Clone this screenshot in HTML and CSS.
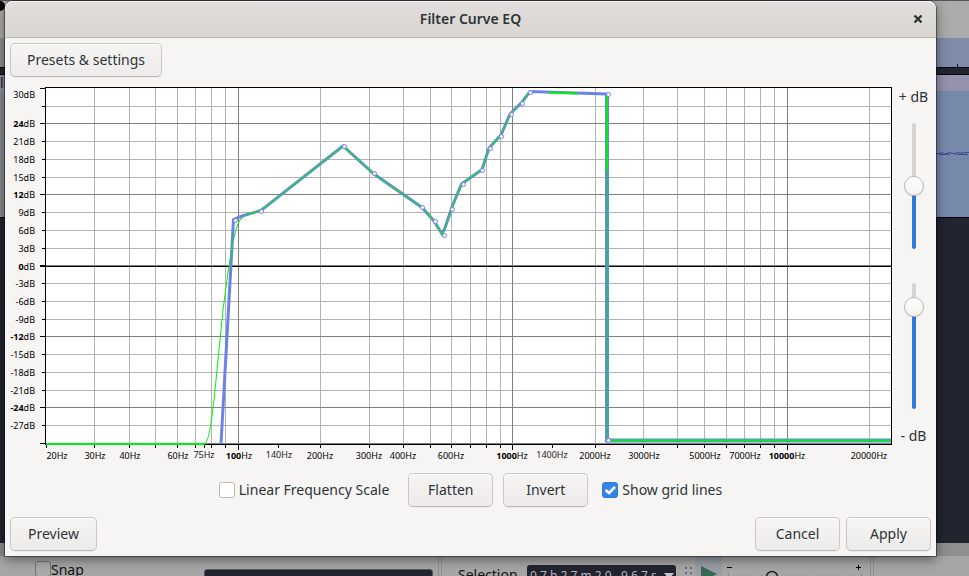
FILE: index.html
```html
<!DOCTYPE html>
<html lang="en">
<head>
<meta charset="utf-8">
<title>Filter Curve EQ</title>
<link rel="stylesheet" href="styles.css">
</head>
<body>
<div class="workspace">
  <div class="top-tools"><span class="record"></span></div>
  <div class="ruler"><span class="ruler-tick"></span></div>
  <div class="divider"></div>
  <div class="clip-title">li</div>
  <div class="clip">
    <svg class="wave" width="33" height="6" viewBox="0 0 33 6"><path d="M0 2.500H5V1.500H7V3.500H9V2.500H12V1.500H15V2.500H19V3.500H20V1.500H23V2.500H25V1.500H27V3.500H29V1.500H33M3 3.500H14M21 3.500H32" fill="none" stroke="#46489a" stroke-width="1"/></svg>
  </div>
  <div class="void"></div>
  <div class="scroll-strip"></div>
  <div class="bottom-tools">
    <label class="snap"><input type="checkbox" class="snap-box">Snap</label>
    <span class="snap-field"></span>
    <span class="grip"></span>
    <span class="selection-label">Selection</span>
    <span class="time-field">0 7 h 2 7 m 2 0 . 9 6 7 s<svg width="10" height="6" viewBox="0 0 10 6"><path d="M0 0H10L5 6Z" fill="#c4c4c4"/></svg></span>
    <svg class="dots" width="8" height="12" viewBox="0 0 8 12"><path d="M0 1H2M5 1H7M0 6H2M5 6H7M0 11H2M5 11H7" stroke="#676b85" stroke-width="2"/></svg>
    <span class="play"><svg width="16" height="16" viewBox="0 0 16 16"><path d="M0 0L16 8L0 16Z" fill="#376a52"/></svg></span>
    <svg class="speed" width="142" height="20" viewBox="723 556 142 20"><path d="M726 567.500H731M855 567.500H860M857.500 565V570" stroke="#000" fill="none"/><path d="M727.500 573V576M738.500 575V576M749.500 575V576M760.500 575V576M783.500 575V576M794.500 575V576M805.500 575V576M816.500 575V576M827.500 575V576M838.500 575V576M849.500 575V576M860.500 573V576" stroke="#8386a0"/><circle cx="771" cy="577" r="5.500" fill="none" stroke="#222" stroke-width="1.500"/></svg>
    <span class="grip"></span>
  </div>
</div>

<main class="dialog">
  <header class="titlebar">
    <h1>Filter Curve EQ</h1>
    <button class="close" aria-label="Close"><svg width="10" height="10" viewBox="0 0 10 10"><path d="M1.500 1.500L8.500 8.500M8.500 1.500L1.500 8.500" stroke="#2e3436" stroke-width="2.400"/></svg></button>
  </header>
  <div class="row"><button class="btn">Presets &amp; settings</button></div>

  <div class="editor">
    <svg class="chart" viewBox="5 82 890 386" role="img" aria-label="Frequency response">
      <rect x="46" y="88" width="845" height="356" fill="#fff"/>
      <g fill="none" shape-rendering="crispEdges">
        <path class="minor" d="M94.500 88V443M129.500 88V443M155.500 88V443M177.500 88V443M195.500 88V443M211.500 88V443M225.500 88V443M320.500 88V443M369.500 88V443M403.500 88V443M430.500 88V443M451.500 88V443M470.500 88V443M486.500 88V443M500.500 88V443M595.500 88V443M643.500 88V443M677.500 88V443M704.500 88V443M726.500 88V443M744.500 88V443M760.500 88V443M774.500 88V443M869.500 88V443"/>
        <path class="minor" d="M46 106.500H891M46 141.500H891M46 159.500H891M46 177.500H891M46 212.500H891M46 230.500H891M46 248.500H891M46 283.500H891M46 301.500H891M46 319.500H891M46 354.500H891M46 372.500H891M46 390.500H891M46 425.500H891"/>
        <path class="major" d="M238.500 88V443M512.500 88V443M787.500 88V443M46 123.500H891M46 194.500H891M46 265.500H891M46 336.500H891M46 407.500H891M46 443.500H891"/>
        <path class="axis" d="M46 266.500H891M45.500 444.500V87.500H891.500V444.500H45M40 88.500H45M40 123.500H45M40 194.500H45M40 265.500H45M40 266.500H45M40 336.500H45M40 407.500H45M40 443.500H45"/>
        <path class="axis" d="M42 106.500H45M42 141.500H45M42 159.500H45M42 177.500H45M42 212.500H45M42 230.500H45M42 248.500H45M42 283.500H45M42 301.500H45M42 319.500H45M42 354.500H45M42 372.500H45M42 390.500H45M42 425.500H45"/>
        <path class="axis" d="M46.500 445V448M94.500 445V448M129.500 445V448M155.500 445V448M177.500 445V448M195.500 445V448M204.500 445V448M211.500 445V448M225.500 445V448M238.500 445V450M278.500 445V448M320.500 445V448M369.500 445V448M403.500 445V448M430.500 445V448M451.500 445V448M470.500 445V448M486.500 445V448M500.500 445V448M512.500 445V450M552.500 445V448M595.500 445V448M643.500 445V448M677.500 445V448M704.500 445V448M726.500 445V448M744.500 445V448M760.500 445V448M774.500 445V448M787.500 445V450M869.500 445V448"/>
      </g>
      <path class="envelope" d="M221 444L233.500 219.500L242 216L261 210.500L343 146L374 174L422 207.500L434 221L442 234L445 228L452 207L461.500 184L482 169.500L489 148L501 135L510 114L522 102L530 91.500L607 94"/>
      <path class="envelope tail" d="M607 93V440.500H891"/>
      <path class="response-thin" d="M204 444C209 442 211 424 214 400L223 310L228 272L232 247Q236 226 240 220T261 210.500"/>
      <path class="response" d="M250 214L261 210.500L343 146L374 174L422 207.500L434 221L442 234L445 228L452 207L461.500 184L482 169.500L489 148L501 135L510 114L522 102L530 91.500"/>
      <path class="response-flat" d="M46 444H205M548 92.500L578 93.500M607 95V170M608 440.500H891"/>
      <path class="response-fade" d="M607.500 170V440"/>
      <g class="nodes">
        <circle cx="235.500" cy="220.500" r="2"/><circle cx="261.500" cy="211.500" r="2"/><circle cx="344.500" cy="146.500" r="2"/><circle cx="374.500" cy="173.500" r="2"/><circle cx="422.500" cy="207.500" r="2"/><circle cx="435.500" cy="221.500" r="2"/><circle cx="444.500" cy="235.500" r="2"/><circle cx="452.500" cy="209.500" r="2"/><circle cx="463.500" cy="184.500" r="2"/><circle cx="482.500" cy="170.500" r="2"/><circle cx="490.500" cy="148.500" r="2"/><circle cx="501.500" cy="136.500" r="2"/><circle cx="511.500" cy="114.500" r="2"/><circle cx="522.500" cy="103.500" r="2"/><circle cx="530.500" cy="92.500" r="2"/><circle cx="608.500" cy="94.500" r="2"/><circle cx="608.500" cy="440.500" r="2"/>
      </g>
      <g class="labels db">
        <text x="35" y="98">30dB</text>
        <text x="35" y="127"><tspan class="b">24</tspan>dB</text>
        <text x="35" y="145">21dB</text>
        <text x="35" y="163">18dB</text>
        <text x="35" y="181">15dB</text>
        <text x="35" y="198"><tspan class="b">12</tspan>dB</text>
        <text x="35" y="216">9dB</text>
        <text x="35" y="234">6dB</text>
        <text x="35" y="252">3dB</text>
        <text x="35" y="270"><tspan class="b">0</tspan>dB</text>
        <text x="35" y="287">-3dB</text>
        <text x="35" y="305">-6dB</text>
        <text x="35" y="323">-9dB</text>
        <text x="35" y="340"><tspan class="b">-12</tspan>dB</text>
        <text x="35" y="358">-15dB</text>
        <text x="35" y="376">-18dB</text>
        <text x="35" y="394">-21dB</text>
        <text x="35" y="411"><tspan class="b">-24</tspan>dB</text>
        <text x="35" y="429">-27dB</text>
      </g>
      <g class="labels hz">
        <text x="57" y="459">20Hz</text>
        <text x="95" y="459">30Hz</text>
        <text x="130" y="459">40Hz</text>
        <text x="178" y="459">60Hz</text>
        <text class="soft" x="204" y="458">75Hz</text>
        <text x="239" y="459"><tspan class="b">100</tspan>Hz</text>
        <text class="soft" x="279" y="458">140Hz</text>
        <text x="320" y="459">200Hz</text>
        <text x="369" y="459">300Hz</text>
        <text x="403" y="459">400Hz</text>
        <text x="451" y="459">600Hz</text>
        <text x="512" y="459"><tspan class="b">1000</tspan>Hz</text>
        <text class="soft" x="552" y="458">1400Hz</text>
        <text x="595" y="459">2000Hz</text>
        <text x="644" y="459">3000Hz</text>
        <text x="705" y="459">5000Hz</text>
        <text x="745" y="459">7000Hz</text>
        <text x="787" y="459"><tspan class="b">10000</tspan>Hz</text>
        <text x="869" y="459">20000Hz</text>
      </g>
    </svg>
    <div class="range">
      <label for="max-db">+ dB</label>
      <input id="max-db" class="max" type="range" min="0" max="100" value="50">
      <input id="min-db" class="min" type="range" min="0" max="100" value="87">
      <label for="min-db">- dB</label>
    </div>
  </div>

  <div class="row options">
    <label class="check linear"><input type="checkbox">Linear Frequency Scale</label>
    <button class="btn">Flatten</button>
    <button class="btn">Invert</button>
    <label class="check grid-lines"><input type="checkbox" checked>Show grid lines</label>
  </div>
  <div class="row actions">
    <button class="btn preview">Preview</button>
    <span class="spacer"></span>
    <button class="btn">Cancel</button>
    <button class="btn apply">Apply</button>
  </div>
</main>
</body>
</html>
```
FILE: styles.css
```css
* { box-sizing: border-box; }
body {
  margin: 0;
  height: 100vh;
  overflow: hidden;
  position: relative;
  font: 14px/20px "Noto Sans", sans-serif;
  color: #2e3436;
}

/* Editor window behind the dialog */
.workspace { height: 100vh; display: flex; flex-direction: column; background: #22242f; }
.top-tools { height: 38px; background: #ababab; border-top: 1px solid #55555c; overflow: hidden; }
.record { display: block; width: 10px; height: 10px; border-radius: 5px; background: #000; margin-left: -5px; }
.ruler { height: 29px; background: linear-gradient(to right, #8f8f8f 50%, #7f8ba9 50%); display: flex; justify-content: flex-end; align-items: flex-end; }
.ruler-tick { width: 1px; height: 3px; background: #111; margin-right: 11px; }
.divider { height: 8px; border: solid #08090d; border-width: 1px 0; background: #22242f; }
.clip-title { height: 16px; overflow: hidden; background: #9492ac; color: #222; line-height: 16px; }
.clip { height: 127px; background: linear-gradient(to right, #8b8c92 50%, #7789aa 50%); display: flex; align-items: center; justify-content: flex-end; border-bottom: 1px solid #000; }
.void { flex: 1; }
.scroll-strip { height: 13px; background: #8f8f8f; }
.bottom-tools { height: 20px; overflow: hidden; background: #a6a6a6; display: flex; align-items: flex-start; color: #111; }
.snap { display: flex; width: 169px; margin-left: 35px; padding-top: 4px; flex: none; }
.snap-box { appearance: none; width: 16px; height: 16px; margin: 1px 0 0; border: 1px solid #747474; border-radius: 3px; background: #a9a9a9; flex: none; }
.snap-field { width: 229px; height: 20px; margin: 13px 5px 0 0; border-radius: 3px; border: 1px solid #555; background: #22242f; flex: none; }
.grip { width: 4px; height: 20px; border: solid #8e8e8e; border-width: 0 1px; flex: none; }
.selection-label { margin: 9px 7px 0 16px; width: 62px; flex: none; }
.time-field { display: flex; align-items: center; justify-content: space-between; width: 149px; height: 22px; margin-top: 9px; padding: 0 2px 0 3px; border-radius: 3px; background: #22242f; color: #b4b4c0; font-size: 12px; white-space: nowrap; flex: none; }
.dots { margin: 11px 2px 0 9px; flex: none; }
.play { width: 27px; height: 20px; padding: 10px 0 0 6px; margin-right: 2px; background: #9a9ca6; flex: none; overflow: hidden; }
.speed { flex: none; margin-right: 4px; }

/* Dialog */
.dialog {
  position: absolute;
  top: 1px;
  left: 5px;
  right: 33px;
  background: #f6f5f4;
  border-radius: 8px 8px 0 0;
  box-shadow: 0 0 0 1px rgba(0, 0, 0, .4), 0 3px 12px rgba(0, 0, 0, .5);
}
.titlebar {
  height: 37px;
  display: grid;
  grid-template-columns: 1fr auto 1fr;
  align-items: center;
  border-bottom: 1px solid #bfb8b1;
  border-radius: 8px 8px 0 0;
  background: linear-gradient(#e1dedb, #dad6d2);
  box-shadow: inset 0 1px #f6f5f4;
}
h1 { grid-column: 2; margin: 0; font-size: 14px; font-weight: 600; }
.close { justify-self: end; display: flex; padding: 4px; margin-right: 9px; border: 0; background: none; }

.row { display: flex; align-items: center; padding: 5px; }
.btn {
  height: 34px;
  min-width: 85px;
  padding: 0 16px;
  border: 1px solid #cdc7c2;
  border-bottom-color: #bfb8b1;
  border-radius: 5px;
  background: linear-gradient(#f6f5f4, #edebe9);
  box-shadow: inset 0 1px #fff, 0 1px 1px rgba(0, 0, 0, .05);
  color: inherit;
  font: inherit;
}
.preview { min-width: 87px; }
.options { justify-content: center; }
.options .btn + .btn { margin-left: 10px; }
.linear { margin-right: 19px; }
.grid-lines { margin-left: 14px; }
.check { display: flex; align-items: center; gap: 4px; }
.check input {
  appearance: none;
  width: 16px;
  height: 16px;
  margin: 0;
  border: 1px solid #bfb8b1;
  border-radius: 3px;
  background: #fff;
}
.check input:checked {
  border-color: #2f7bdc;
  background: #3584e4 url("data:image/svg+xml,%3Csvg xmlns='http://www.w3.org/2000/svg' viewBox='0 0 14 14'%3E%3Cpath d='M2.500 7L6 10L12 4' fill='none' stroke='white' stroke-width='2.600'/%3E%3C/svg%3E") center / 14px no-repeat;
}
.spacer { flex: 1; }
.apply { margin-left: 6px; }

.editor { display: flex; align-items: flex-start; }
.chart { display: block; flex: 1; min-width: 0; height: auto; }
.minor { stroke: #b2b2b2; }
.major { stroke: #7f7f7f; }
.axis { stroke: #000; }
.envelope { fill: none; stroke: #6e82e6; stroke-width: 3; }
.tail { stroke-width: 4; }
.response-thin { fill: none; stroke: #00f010; stroke-width: 1; }
.response { fill: none; stroke: #0ce61c; stroke-width: 1; shape-rendering: crispEdges; }
.response-flat { fill: none; stroke: #00f010; stroke-width: 2; }
.response-fade { fill: none; stroke: #2fb877; stroke-width: 2; }
.nodes { fill: #fff; stroke: #6e82e6; stroke-width: 1; }
.labels { font-size: 9px; fill: #000; }
.db { text-anchor: end; }
.hz { text-anchor: middle; }
.b { font-weight: 700; }
.soft { fill: #222; }

.range { width: 41px; display: flex; flex-direction: column; align-items: center; padding: 5px 4px 0 0; }
.range input {
  appearance: none;
  writing-mode: vertical-lr;
  direction: rtl;
  width: 20px;
  height: 126px;
  margin: 0;
  background: none;
}
.range .max { margin: 16px 0 34px; }
.range .min { margin-bottom: 17px; }
.range input::-webkit-slider-runnable-track {
  width: 4px;
  height: 126px;
  border-radius: 2px;
  background: linear-gradient(#d8d4d0 50%, #2c7adb 50%);
}
.range .min::-webkit-slider-runnable-track { background: linear-gradient(#d8d4d0 19%, #2c7adb 19%); }
.range input::-webkit-slider-thumb {
  appearance: none;
  width: 20px;
  height: 20px;
  margin-left: -8px;
  border: 1px solid #bfb8b1;
  border-radius: 10px;
  background: linear-gradient(#fff, #f3f2f0);
  box-shadow: 0 1px 1px rgba(0, 0, 0, .1);
}
```
